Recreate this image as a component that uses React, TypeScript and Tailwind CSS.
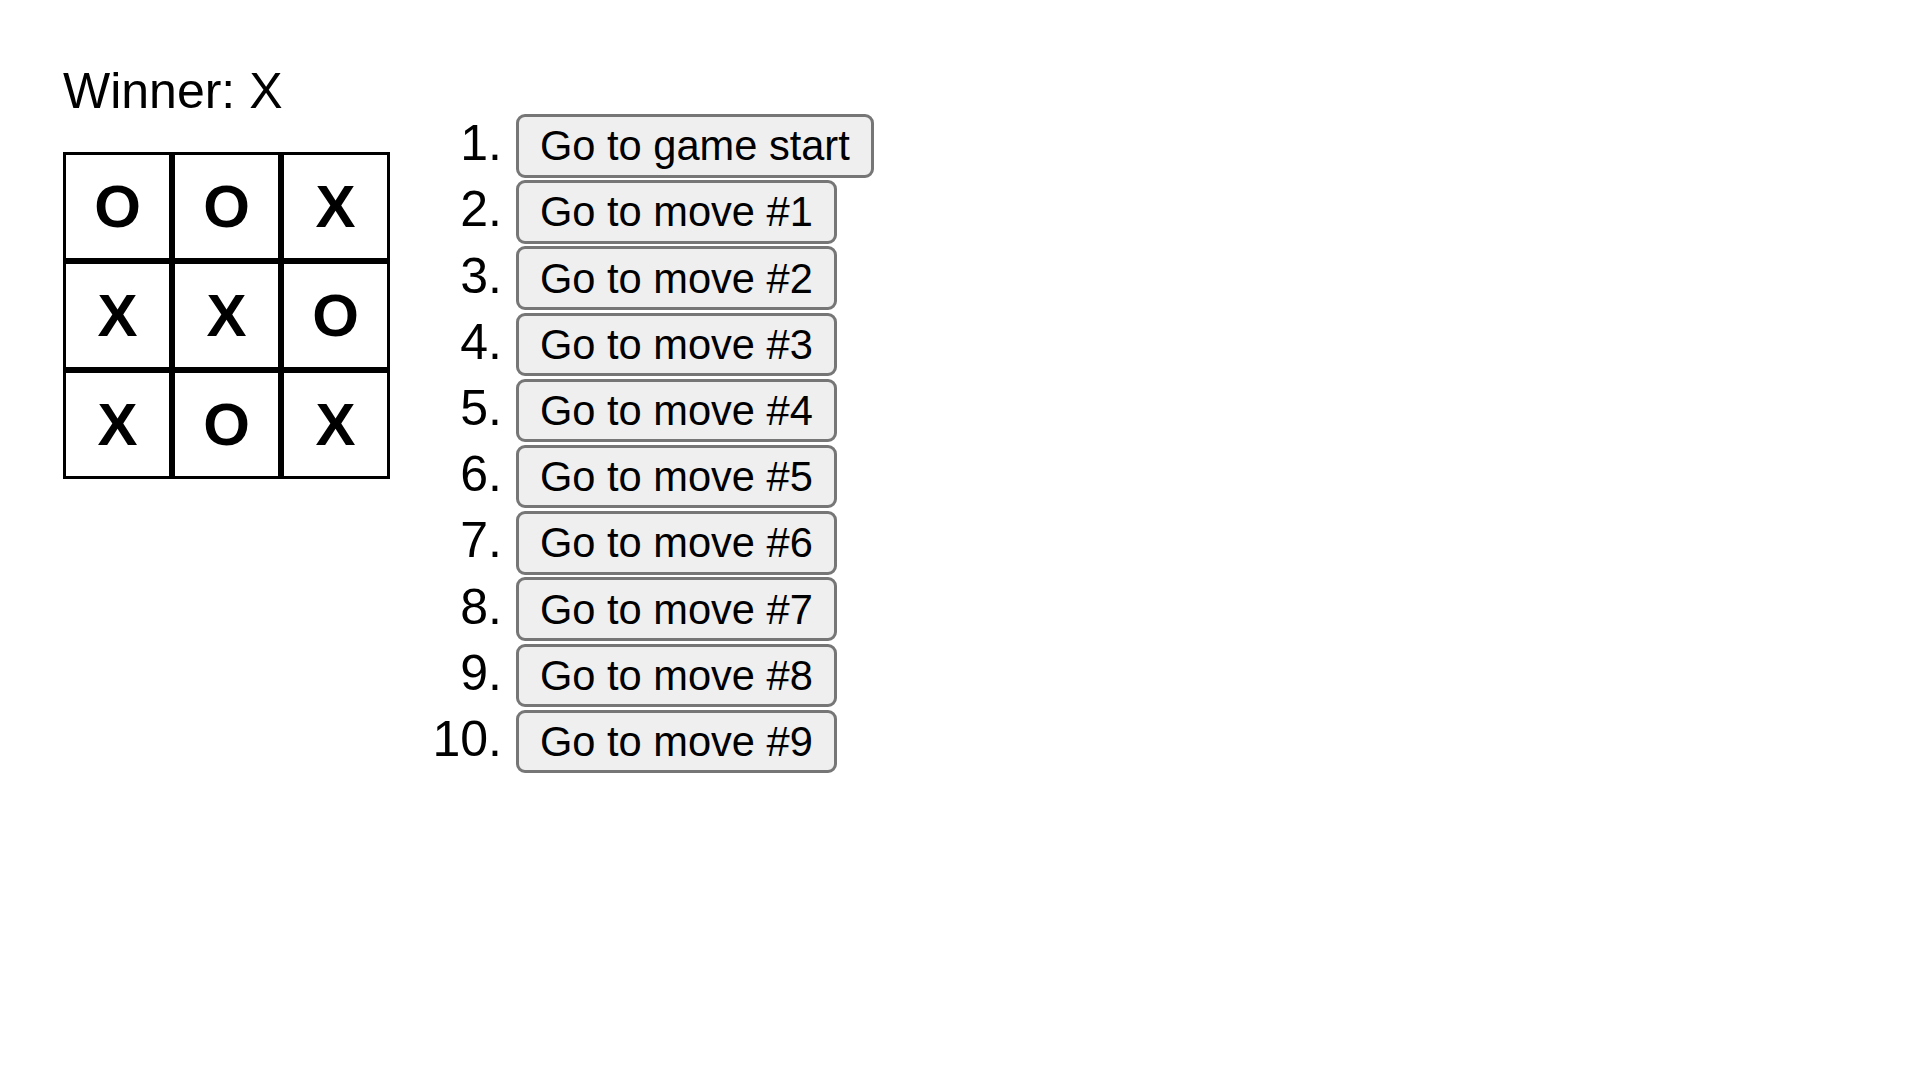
import { useState } from "react";

type Cell = "X" | "O" | null;

const finalBoard: Cell[] = ["O", "O", "X", "X", "X", "O", "X", "O", "X"];

function Square({ value }: { value: Cell }) {
  return (
    <button className="flex h-[109px] w-[109px] items-center justify-center border-[3px] border-black bg-white p-0 text-[60px] font-bold text-black">
      {value}
    </button>
  );
}

export default function App() {
  const [step, setStep] = useState(9);
  const moves = Array.from({ length: 10 }, (_, i) => i);

  return (
    <div className="min-h-screen bg-white p-[63px] text-black [font-family:'Liberation_Sans',Arial,sans-serif]">
      <div className="flex flex-row items-start">
        <div>
          <div className="mb-[32px] text-[50px] leading-[57px]">Winner: X</div>
          <div className="grid w-[327px] grid-cols-3">
            {finalBoard.map((v, i) => (
              <Square key={i} value={v} />
            ))}
          </div>
        </div>

        <ol className="mt-[51px] flex flex-col">
          {moves.map((m) => (
            <li key={m} className="flex h-[66.2px] items-baseline">
              <span className="w-[112px] text-right text-[50px] leading-[50px]">{m + 1}.</span>
              <button
                onClick={() => setStep(m)}
                className="ml-[14px] h-[63.5px] rounded-[9px] border-[3px] border-[#767676] bg-[#efefef] px-[21px] py-[4px] text-[41.6px] leading-[49px] text-black"
                data-active={step === m}
              >
                {m === 0 ? "Go to game start" : `Go to move #${m}`}
              </button>
            </li>
          ))}
        </ol>
      </div>
    </div>
  );
}
